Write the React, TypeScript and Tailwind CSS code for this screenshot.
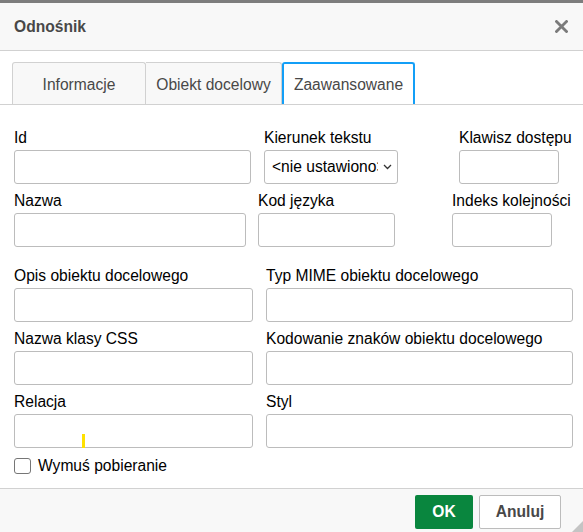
import React from "react";

function Field({ label, w, children }: { label: string; w: string; children?: React.ReactNode }) {
  return (
    <div className={`flex flex-col ${w}`}>
      <span className="leading-[18px] text-black whitespace-nowrap">{label}</span>
      <div className="relative mt-[3px] h-[34px] border border-[#bcbcbc] rounded-[3px] bg-white">{children}</div>
    </div>
  );
}

export default function App() {
  return (
    <div className="w-[583px] h-[532px] bg-white flex flex-col overflow-hidden font-['Liberation_Sans',Arial,sans-serif] text-[15.6px]">
      <div className="h-[3px] bg-[#7d7d7d] shrink-0" />
      <div className="h-[48px] shrink-0 bg-[#f8f8f8] border-b border-[#d1d1d1] flex items-center justify-between pl-[14px] pr-[15px]">
        <span className="font-bold text-[#484848]">Odnośnik</span>
        <svg width="13" height="13" viewBox="0 0 13 13">
          <path d="M1.5 1.5 L11.5 11.5 M11.5 1.5 L1.5 11.5" stroke="#7b7b7b" strokeWidth="2.8" strokeLinecap="square" />
        </svg>
      </div>
      <div className="shrink-0 flex pl-[12px] pt-[11px] border-b border-[#d1d1d1]">
        <div className="w-[134px] h-[42px] pt-[2px] flex items-center justify-center border border-b-0 border-[#d1d1d1] rounded-t-[3px] bg-[#f8f8f8] text-[#484848]">
          Informacje
        </div>
        <div className="w-[136px] h-[42px] pt-[2px] flex items-center justify-center border border-l-0 border-b-0 border-[#d1d1d1] rounded-tr-[3px] bg-[#f8f8f8] text-[#484848]">
          Obiekt docelowy
        </div>
        <div className="w-[133px] h-[42px] pt-[2px] flex items-center justify-center border-2 border-b-0 border-[#139ff7] rounded-t-[3px] bg-white text-[#484848]">
          Zaawansowane
        </div>
      </div>
      <div className="flex-1 flex flex-col pl-[14px] pt-[24px]">
        <div className="flex">
          <Field label="Id" w="w-[237px]" />
          <div className="ml-[13px] flex flex-col w-[134px]">
            <span className="leading-[18px] text-black whitespace-nowrap">Kierunek tekstu</span>
            <div className="mt-[3px] h-[34px] border border-[#bcbcbc] rounded-[3px] bg-white flex items-center pl-[7px]">
              <div className="w-[106px] overflow-hidden whitespace-nowrap text-black">&lt;nie ustawiono&gt;</div>
              <svg width="9" height="6" viewBox="0 0 9 6" className="ml-[5px]">
                <path d="M1 1 L4.5 4.5 L8 1" stroke="#333" strokeWidth="1.3" fill="none" />
              </svg>
            </div>
          </div>
          <div className="ml-[61px]">
            <Field label="Klawisz dostępu" w="w-[100px]" />
          </div>
        </div>
        <div className="flex mt-[8px]">
          <Field label="Nazwa" w="w-[232px]" />
          <div className="ml-[12px]">
            <Field label="Kod języka" w="w-[137px]" />
          </div>
          <div className="ml-[57px]">
            <Field label="Indeks kolejności" w="w-[100px]" />
          </div>
        </div>
        <div className="flex mt-[20px]">
          <Field label="Opis obiektu docelowego" w="w-[239px]" />
          <div className="ml-[13px]">
            <Field label="Typ MIME obiektu docelowego" w="w-[307px]" />
          </div>
        </div>
        <div className="flex mt-[8px]">
          <Field label="Nazwa klasy CSS" w="w-[239px]" />
          <div className="ml-[13px]">
            <Field label="Kodowanie znaków obiektu docelowego" w="w-[307px]" />
          </div>
        </div>
        <div className="flex mt-[8px]">
          <Field label="Relacja" w="w-[239px]">
            <div className="absolute left-[67px] top-[19px] w-[3px] h-[14px] bg-[#ffe100]" />
          </Field>
          <div className="ml-[13px]">
            <Field label="Styl" w="w-[307px]" />
          </div>
        </div>
        <div className="flex items-center mt-[9px]">
          <div className="w-[17px] h-[16px] border border-[#767676] rounded-[3px] bg-white" />
          <span className="ml-[7px] leading-[18px] text-black">Wymuś pobieranie</span>
        </div>
      </div>
      <div className="relative shrink-0 h-[44px] bg-[#f8f8f8] border-t border-[#d1d1d1] flex justify-end items-start pt-[6px] pr-[22px]">
        <div className="w-[58px] h-[34px] bg-[#09863e] rounded-[2px] flex items-center justify-center text-white font-bold">OK</div>
        <div className="ml-[6px] w-[82px] h-[34px] bg-white border border-[#bcbcbc] rounded-[2px] flex items-center justify-center text-[#484848] font-bold">Anuluj</div>
        <svg width="11" height="11" viewBox="0 0 11 11" className="absolute right-0 bottom-0">
          <polygon points="11,0 11,11 0,11" fill="#c4c4c4" />
        </svg>
      </div>
    </div>
  );
}
